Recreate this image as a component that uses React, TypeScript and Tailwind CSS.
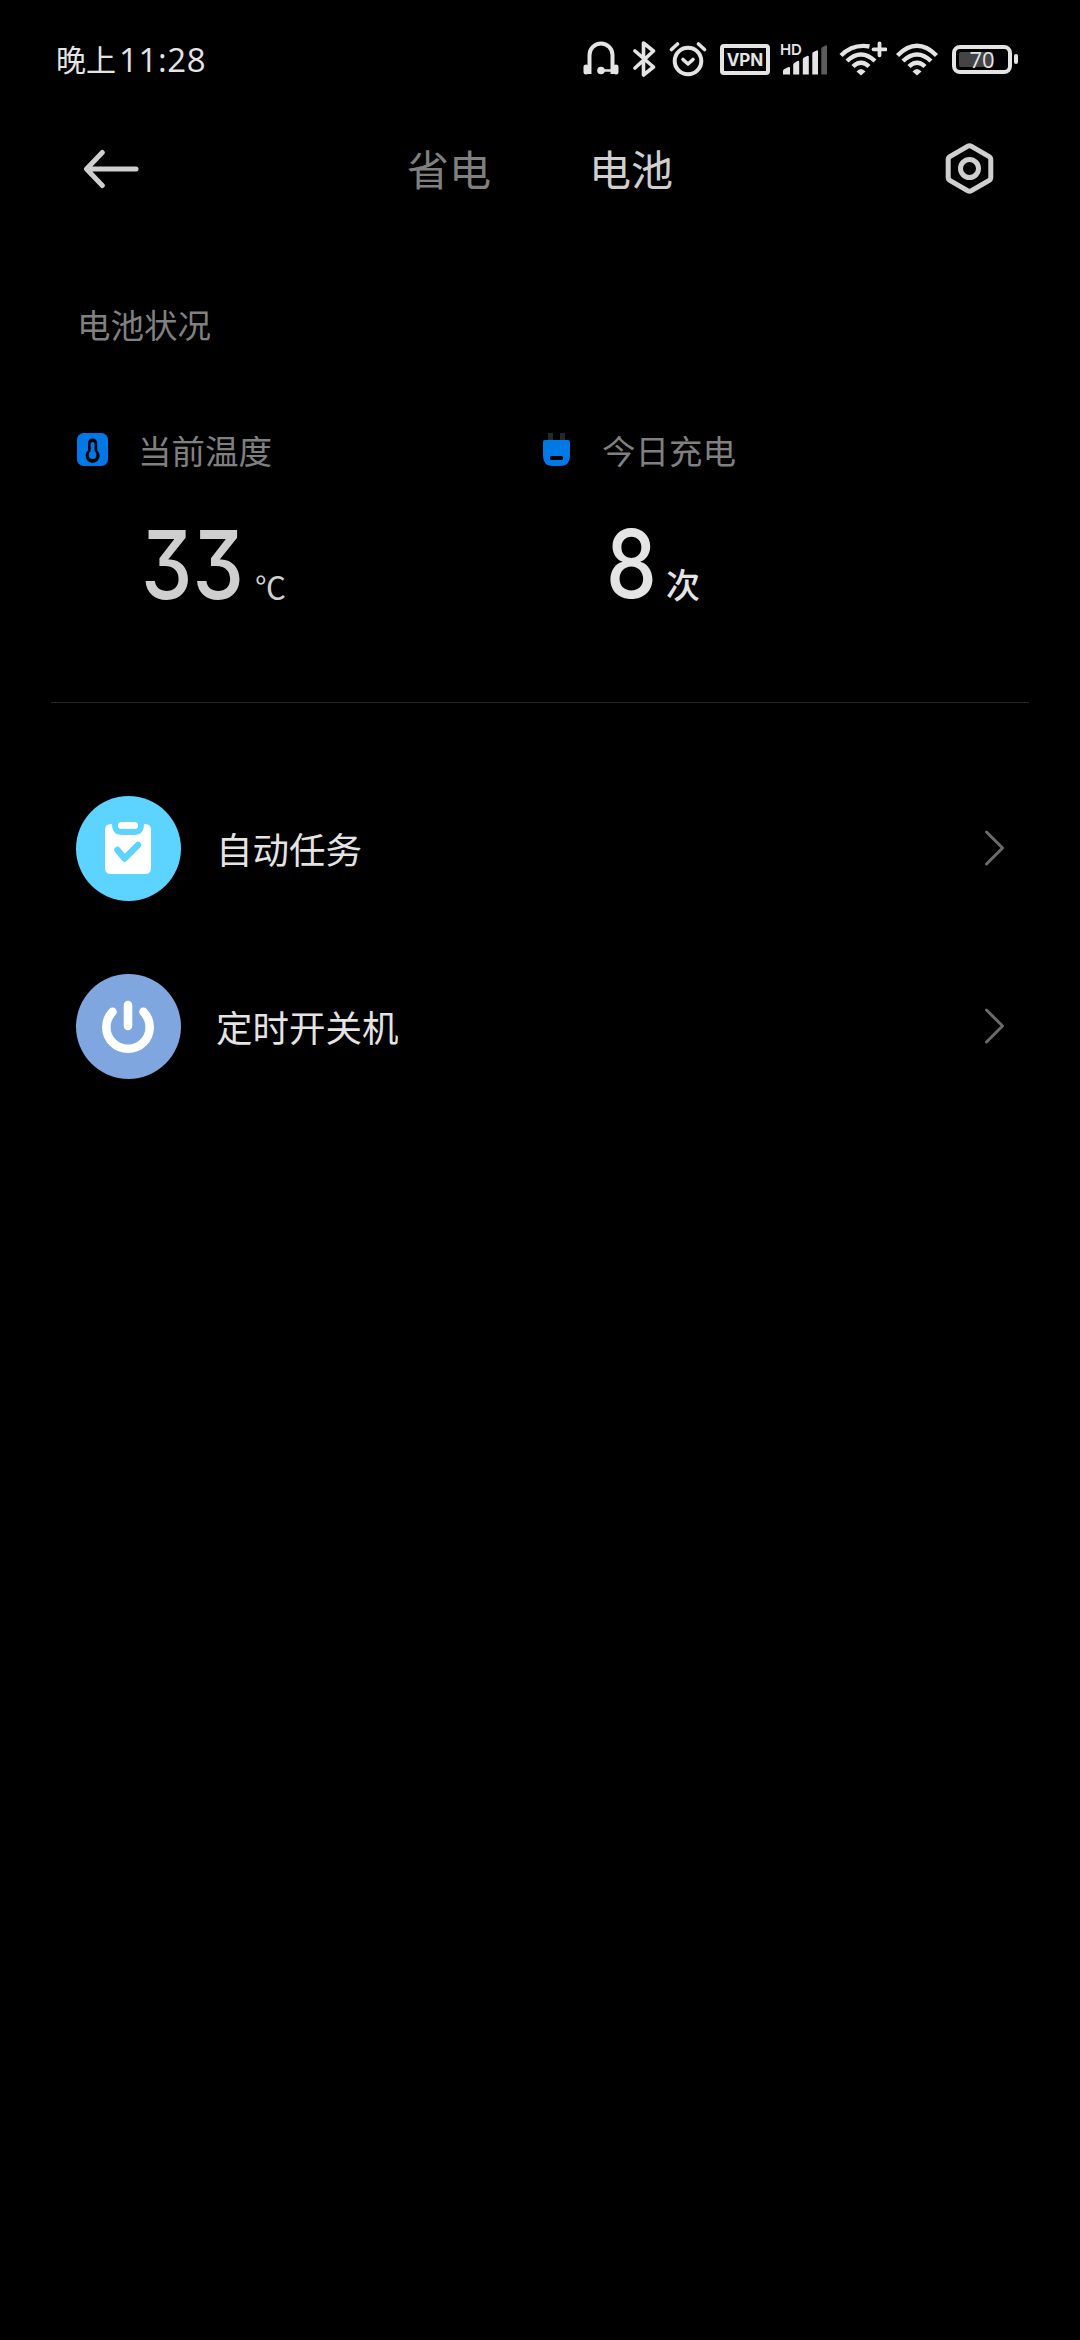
import React from 'react';

interface StatProps {
  icon: React.ReactNode;
  label: string;
  children: React.ReactNode;
}

interface RowProps {
  icon: React.ReactNode;
  label: string;
}

const HeadsetIcon = () => (
  <svg className="h-[36px] w-[36px]" viewBox="583 40 36 36" fill="none" stroke="#e4e4e4">
    <path d="M589.5 73V54a11.5 11.5 0 0 1 23 0V73" strokeWidth="4" />
    <path d="M586 66v5M616 66v5" strokeWidth="5" strokeLinecap="round" />
    <path d="M601 69.5h12" strokeWidth="2.5" />
    <circle cx="601" cy="69.5" r="3.8" fill="#e4e4e4" stroke="none" />
  </svg>
);

const BluetoothIcon = () => (
  <svg className="ml-[14px] h-[36px] w-[24px]" viewBox="633 40 24 36" fill="none" stroke="#e4e4e4" strokeWidth="3.6" strokeLinecap="round" strokeLinejoin="round">
    <path d="M635 50l18.5 16L643.5 74V42L653.5 50 635 67" />
  </svg>
);

const AlarmIcon = () => (
  <svg className="ml-[12px] h-[37px] w-[38px]" viewBox="669 40 38 37" fill="none" stroke="#e4e4e4" strokeLinecap="round" strokeLinejoin="round">
    <circle cx="688" cy="60" r="13.3" strokeWidth="4" />
    <path d="M683 58.5l5 4.5 5-4.5" strokeWidth="3.6" />
    <path d="M671.5 48.5l6-5.500M704.5 48.5l-6-5.500" strokeWidth="3.6" />
  </svg>
);

const SignalIcon = () => (
  <div className="relative ml-[10px] h-[36px] w-[48px]">
    <span className="absolute left-0 top-[1px] font-['Inter'] text-[15px] leading-[15px] font-semibold tracking-[-0.3px] text-[#e4e4e4]">HD</span>
    <svg className="h-[36px] w-[48px]" viewBox="780 40 48 36" fill="#e4e4e4">
      <path d="M783 73.5V70q0-1.500 1.500-2l4-2q1.500-.5 1.500 1v6.500z" />
      <path d="M793.2 73.5V64q0-1.500 1.200-2l3-2q1.800-.8 1.800 1v12.500z" />
      <path d="M802.8 73.5V58.5q0-1.500 1.200-2l3-1.500q1.800-.8 1.800 1v17.500z" />
      <path d="M812.3 73.5V53q0-1.500 1.200-2l3-1.500q1.500-.8 1.500 1v23z" />
      <path d="M821.3 73.5V48q0-1.500 1.200-2l3-1.500q1.500-.8 1.500 1v28z" fill="#5c5c5c" />
    </svg>
  </div>
);

const WifiPlusIcon = () => (
  <svg className="ml-[11px] h-[36px] w-[48px]" viewBox="839 40 48 36" fill="none" stroke="#e4e4e4" strokeWidth="4.4">
    <path d="M841 54.500Q853 42.500 869.500 45.500" />
    <path d="M847 60Q861 47 875 60" />
    <path d="M853 65.500Q861 58 869 65.500" />
    <path d="M856.500 70.500Q861 65.500 865.500 70.500L861 74.500z" fill="#e4e4e4" stroke="none" />
    <path d="M873.500 48.300h12M879.500 42.300v12" strokeWidth="3.8" strokeLinecap="round" />
  </svg>
);

const WifiIcon = () => (
  <svg className="ml-[9px] h-[36px] w-[42px]" viewBox="896 40 42 36" fill="none" stroke="#e4e4e4" strokeWidth="4.4">
    <path d="M897.500 54.500Q917 35 936.500 54.500" />
    <path d="M903 60Q917 47 931 60" />
    <path d="M909 65.500Q917 58 925 65.500" />
    <path d="M912.500 70.500Q917 65.500 921.500 70.500L917 74.500z" fill="#e4e4e4" stroke="none" />
  </svg>
);

const BatteryIcon = () => (
  <div className="ml-[14px] flex items-center gap-[2px]">
    <div className="relative flex h-[29px] w-[60px] items-center justify-center rounded-[8px] border-[4px] border-[#e4e4e4]">
      <div className="absolute left-[3px] top-[3px] h-[15px] w-[34px] rounded-[2px] bg-[#444]" />
      <span className="relative font-['Open_Sans'] text-[22px] leading-[21px] text-[#e4e4e4]">70</span>
    </div>
    <div className="h-[10px] w-[4px] rounded-[2px] bg-[#e4e4e4]" />
  </div>
);

const StatusBar = () => (
  <div className="flex h-[116px] items-start justify-between pl-[56px] pr-[62px] pt-[40px]">
    <div className="flex h-[38px] items-center text-[#e4e4e4]">
      <span className="-mt-[2px] text-[30px] leading-[38px]">晚上</span>
      <span className="ml-[3px] mt-[2px] font-['Open_Sans'] text-[33px] leading-[38px] tracking-[0.6px]">11:28</span>
    </div>
    <div className="flex h-[38px] items-center">
      <HeadsetIcon />
      <BluetoothIcon />
      <AlarmIcon />
      <div className="ml-[13px] flex h-[31px] w-[50px] items-center justify-center rounded-[4px] border-[4px] border-[#e4e4e4]">
        <span className="mt-[2px] font-['Inter'] text-[17px] leading-[20px] font-bold text-[#e4e4e4]">VPN</span>
      </div>
      <SignalIcon />
      <WifiPlusIcon />
      <WifiIcon />
      <BatteryIcon />
    </div>
  </div>
);

const Header = () => (
  <header className="flex h-[106px] items-center">
    <svg className="ml-[83px] h-[40px] w-[56px]" viewBox="83 149 56 40" fill="none" stroke="#cfcfcf" strokeWidth="5" strokeLinecap="round" strokeLinejoin="round">
      <path d="M136 169H87M102.300 152.500L86.500 169l15.800 16.500" />
    </svg>
    <nav className="-mt-[2px] ml-[268px] flex gap-[98px] text-[42px] leading-[60px]">
      <span className="text-[#808080]">省电</span>
      <span className="text-[#cfcfcf]">电池</span>
    </nav>
    <svg className="ml-auto mr-[84px] h-[54px] w-[52px]" viewBox="944 142 52 54" fill="none" stroke="#cfcfcf" strokeWidth="5" strokeLinejoin="round">
      <path d="M967.500 146.400q2-1.200 4 0l17.300 10q2 1.200 2 3.400v17.400q0 2.200-2 3.400l-17.300 10q-2 1.200-4 0l-17.300-10q-2-1.200-2-3.400v-17.400q0-2.200 2-3.400z" />
      <circle cx="969.500" cy="168.500" r="9" />
    </svg>
  </header>
);

const ThermometerIcon = () => (
  <svg className="h-[34px] w-[32px]" viewBox="77 433 32 34">
    <rect x="77" y="433" width="31" height="33" rx="6.500" fill="#0078e6" />
    <path d="M88 443a4.600 4.600 0 0 1 9.200 0v7.600a7 7 0 1 1-9.200 0z" fill="#000" />
    <path d="M92.600 444v9" stroke="#0078e6" strokeWidth="4" strokeLinecap="round" />
    <circle cx="92.600" cy="455" r="3.900" fill="#0078e6" />
  </svg>
);

const PlugIcon = () => (
  <svg className="ml-[2px] h-[34px] w-[28px]" viewBox="543 433 28 34">
    <path d="M548 433h5v8h-5zM560 433h5v8h-5z" fill="#24292e" />
    <path d="M543 442q0-2 2-2h23q2 0 2 2v14q0 10-10 10h-7q-10 0-10-10z" fill="#0078e6" />
    <rect x="550" y="456" width="13" height="4" rx="1.500" fill="#000" />
  </svg>
);

const Stat: React.FC<StatProps> = ({ icon, label, children }) => (
  <div className="w-[464px]">
    <div className="flex h-[50px] items-center">
      <div className="w-[61px]">{icon}</div>
      <span className="text-[33.5px] leading-[50px] text-[#808080]">{label}</span>
    </div>
    {children}
  </div>
);

const TaskIcon = () => (
  <svg className="h-[105px] w-[105px]" viewBox="76 796 105 105" fill="none">
    <circle cx="128.500" cy="848.500" r="52.500" fill="#5cd4ff" />
    <path d="M112 824h-1q-6 0-6 6v38q0 6 6 6h34q6 0 6-6v-38q0-6-6-6h-1q0 11-10 11h-12q-10 0-10-11z" fill="#fff" />
    <rect x="118" y="822" width="20" height="7" rx="3.500" fill="#fff" />
    <path d="M117.500 850l7 8.500 13.500-13.500" stroke="#5cd4ff" strokeWidth="6.500" strokeLinecap="round" strokeLinejoin="round" />
  </svg>
);

const PowerIcon = () => (
  <svg className="h-[105px] w-[105px]" viewBox="76 974 105 105" fill="none">
    <circle cx="128.500" cy="1026.500" r="52.500" fill="#7fa6de" />
    <path d="M112.600 1011.800a21.700 21.700 0 1 0 30.800 0M128 1005v21" stroke="#fff" strokeWidth="8.600" strokeLinecap="round" />
  </svg>
);

const Row: React.FC<RowProps> = ({ icon, label }) => (
  <li className="flex h-[178px] items-center pl-[76px] pr-[74px]">
    {icon}
    <span className="ml-[35px] mt-[2px] text-[36.5px] leading-[50px] text-[#e4e4e4]">{label}</span>
    <svg className="ml-auto h-[38px] w-[22px]" viewBox="984 829.5 22 38" fill="none" stroke="#6a6a6a" strokeWidth="3" strokeLinecap="round" strokeLinejoin="round">
      <path d="M986.500 832.500L1002.500 848.500 986.500 864.500" />
    </svg>
  </li>
);

export default function App() {
  return (
    <div className="h-[2340px] w-[1080px] overflow-hidden bg-black font-['Noto_Sans_CJK_SC',sans-serif]">
      <StatusBar />
      <Header />
      <section className="mx-[51px] h-[481px] border-b border-[#262626] pl-[26px] pt-[77px]">
        <h2 className="text-[33.5px] leading-[50px] text-[#808080]">电池状况</h2>
        <div className="mt-[76px] flex">
          <Stat icon={<ThermometerIcon />} label="当前温度">
            <div className="mt-[40px] flex h-[100px] items-baseline pl-[64px] text-[#cfcfcf]">
              <span className="w-[114px] origin-left scale-x-[0.86] font-['Inter'] text-[95px] leading-[100px] font-medium [font-feature-settings:'cv09']">33</span>
              <span className="text-[31px]">℃</span>
            </div>
          </Stat>
          <Stat icon={<PlugIcon />} label="今日充电">
            <div className="mt-[39px] flex h-[100px] items-baseline pl-[65px] text-[#e4e4e4]">
              <span className="w-[60px] origin-left scale-x-[0.85] font-['Inter'] text-[95px] leading-[100px] font-medium">8</span>
              <span className="text-[34px] font-medium">次</span>
            </div>
          </Stat>
        </div>
      </section>
      <ul className="pt-[56px]">
        <Row icon={<TaskIcon />} label="自动任务" />
        <Row icon={<PowerIcon />} label="定时开关机" />
      </ul>
    </div>
  );
}
